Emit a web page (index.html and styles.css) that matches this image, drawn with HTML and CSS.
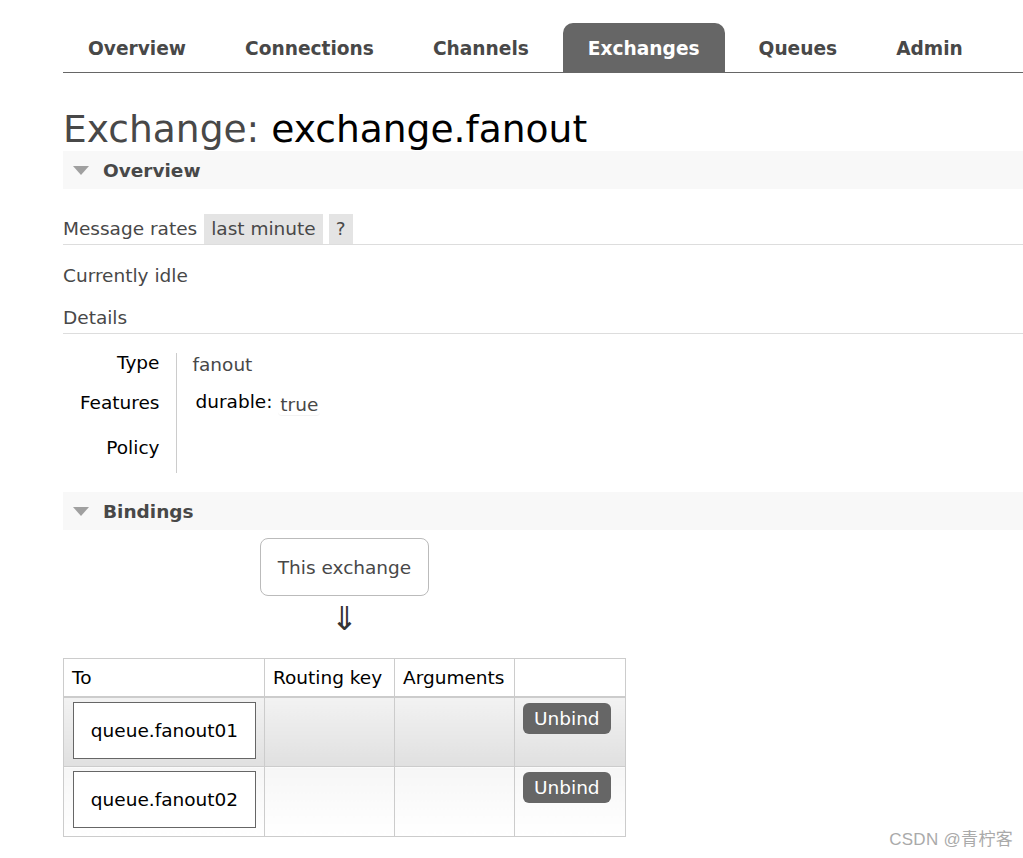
FILE: index.html
```html
<!DOCTYPE html>
<html>
<head>
<meta charset="utf-8">
<link rel="stylesheet" href="styles.css">
</head>
<body>
<div class="page">
  <ul class="tabs">
    <li><a>Overview</a></li>
    <li><a>Connections</a></li>
    <li><a>Channels</a></li>
    <li class="active"><a>Exchanges</a></li>
    <li><a>Queues</a></li>
    <li><a>Admin</a></li>
  </ul>

  <h1 class="title"><span class="kind">Exchange:</span> <b class="name">exchange.fanout</b></h1>

  <div class="section">
    <h2 class="sec-head"><span class="tri"></span>Overview</h2>
    <div class="rates">
      <span class="rates-label">Message rates</span>
      <span class="chip">last minute</span>
      <span class="chip">?</span>
    </div>
    <p class="idle">Currently idle</p>
    <div class="subhead">Details</div>
    <table class="facts">
      <tr class="r1"><th>Type</th><td><span class="val">fanout</span></td></tr>
      <tr class="r2"><th>Features</th><td><span class="feat-key">durable:</span> <span class="feat-val">true</span></td></tr>
      <tr class="r3"><th>Policy</th><td></td></tr>
    </table>
  </div>

  <div class="section">
    <h2 class="sec-head"><span class="tri"></span>Bindings</h2>
    <div class="bindings">
      <div class="this-ex">This exchange</div>
      <div class="arrow">⇓</div>
      <table class="list">
        <thead>
          <tr><th class="c1">To</th><th class="c2">Routing key</th><th class="c3">Arguments</th><th class="c4"></th></tr>
        </thead>
        <tbody>
          <tr class="alt1">
            <td><span class="qbox">queue.fanout01</span></td>
            <td></td><td></td>
            <td><span class="btn">Unbind</span></td>
          </tr>
          <tr class="alt2">
            <td><span class="qbox">queue.fanout02</span></td>
            <td></td><td></td>
            <td><span class="btn">Unbind</span></td>
          </tr>
        </tbody>
      </table>
    </div>
  </div>
</div>
<div class="watermark">CSDN @青柠客</div>
</body>
</html>
```

FILE: styles.css
```css
* { box-sizing: border-box; }
html, body {
  margin: 0;
  padding: 0;
  background: #fff;
}
body {
  font-family: "DejaVu Sans", Verdana, "Noto Sans CJK SC", sans-serif;
  font-size: 18.5px;
  color: #484848;
  overflow: hidden;
  height: 858px;
}
.page {
  padding-left: 63px;
}

/* Tabs */
.tabs {
  list-style: none;
  margin: 23px 0 0 0;
  padding: 0;
  display: flex;
  border-bottom: 1px solid #666;
  height: 50px;
}
.tabs li {
  margin-right: 9px;
}
.tabs a {
  display: block;
  height: 49px;
  line-height: 51px;
  padding: 0 25px;
  font-weight: bold;
  font-size: 18.6px;
  color: #484848;
  border-radius: 10px 10px 0 0;
}
.tabs li.active a {
  background: #666;
  color: #fff;
}

/* Title */
.title {
  margin: 34px 0 0 0;
  font-weight: normal;
  font-size: 37.6px;
  line-height: 44px;
  color: #484848;
}
.title .name {
  font-weight: normal;
  color: #000;
}

/* Section header */
.sec-head {
  margin: 0;
  height: 38px;
  background: #f8f8f8;
  display: flex;
  align-items: center;
  font-size: 18.5px;
  font-weight: bold;
  color: #484848;
  padding-left: 10px;
}
.tri {
  width: 0;
  height: 0;
  border-left: 8px solid transparent;
  border-right: 8px solid transparent;
  border-top: 9px solid #a0a0a0;
  margin-right: 14px;
  margin-top: 1px;
}

/* Overview body */
.rates {
  margin-top: 25px;
  display: flex;
  align-items: center;
  border-bottom: 1px solid #ddd;
  height: 31px;
}
.rates-label {
  margin-right: 7px;
  line-height: 30px;
}
.chip {
  background: #e4e4e4;
  height: 30px;
  line-height: 30px;
  padding: 0 7px;
  margin-right: 6px;
}
.idle {
  margin: 20px 0 0 0;
  line-height: 22px;
}
.subhead {
  margin-top: 20px;
  line-height: 22px;
  padding-bottom: 4px;
  border-bottom: 1px solid #ddd;
}
.facts {
  margin-top: 19px;
  border-collapse: collapse;
}
.facts th {
  font-weight: normal;
  color: #000;
  text-align: right;
  width: 113px;
  padding: 0 16px 0 0;
  border-right: 1px solid #ccc;
}
.facts td {
  padding: 0 0 0 16px;
}
.facts .r1 th, .facts .r1 td {
  height: 30px;
  vertical-align: top;
  padding-top: 0;
  line-height: 20px;
}
.facts .r1 .val { position: relative; top: 2px; }
.facts .r2 th, .facts .r2 td { height: 38px; vertical-align: middle; }
.facts .r3 th, .facts .r3 td { height: 52px; vertical-align: middle; }
.facts .r2 td { padding-left: 19px; }
.feat-key { color: #000; }
.feat-val {
  display: inline-block;
  padding: 0 2px;
  border-bottom: 1px solid #f2f2f2;
  border-radius: 4px;
  position: relative;
  top: 3px;
}

/* Bindings */
.section + .section { margin-top: 19px; }
.bindings {
  padding-top: 8px;
}
.this-ex {
  margin-left: 197px;
  width: 169px;
  height: 58px;
  border: 1px solid #bbb;
  border-radius: 8px;
  display: flex;
  align-items: center;
  justify-content: center;
}
.arrow {
  margin-left: 197px;
  width: 169px;
  text-align: center;
  font-size: 33px;
  line-height: 34px;
  margin-top: 6px;
  color: #333;
}
.list {
  margin-top: 22px;
  border-collapse: collapse;
  border: 1px solid #ccc;
}
.list th, .list td {
  border: 1px solid #ccc;
}
.list th {
  font-weight: normal;
  color: #000;
  text-align: left;
  height: 38px;
  padding: 0 8px;
  background: #fff;
}
.list thead tr { border-bottom: 2px solid #ccc; }
.list .c1 { width: 201px; }
.list .c2 { width: 130px; }
.list .c3 { width: 120px; }
.list .c4 { width: 111px; }
.list td {
  height: 70px;
  vertical-align: top;
  padding: 4px 8px 0 8px;
}
.list td:first-child { padding-left: 9px; }
.alt1 td { background: linear-gradient(#f2f2f2, #e0e0e0); }
.alt2 td { background: linear-gradient(#f6f6f6, #ffffff); }
.qbox {
  display: flex;
  align-items: center;
  justify-content: center;
  width: 183px;
  height: 57px;
  border: 1px solid #666;
  background: #fff;
  color: #000;
}
.btn {
  display: inline-block;
  background: #666;
  color: #fff;
  height: 31px;
  line-height: 31px;
  padding: 0 11px;
  border-radius: 6px;
  margin-top: 1px;
}

.watermark {
  position: absolute;
  right: 10px;
  bottom: 8px;
  font-family: "Liberation Sans", "Noto Sans CJK SC", sans-serif;
  font-size: 17px;
  color: #aaa;
  letter-spacing: 0.3px;
}
```
